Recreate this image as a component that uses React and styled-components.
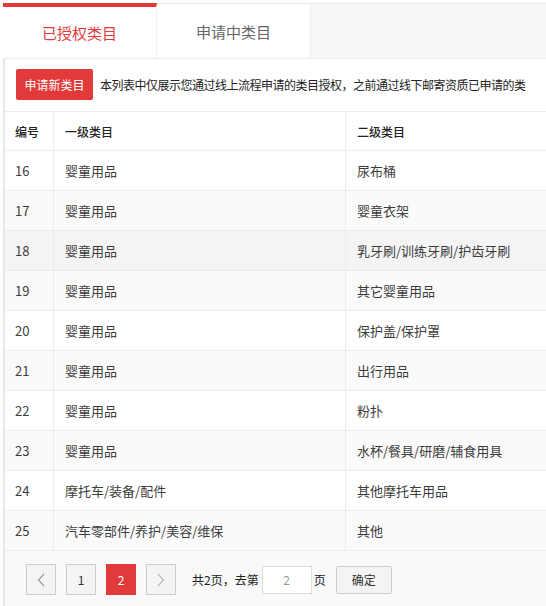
import styled, { createGlobalStyle } from 'styled-components';

const GlobalStyle = createGlobalStyle`
  body {
    margin: 0;
    background: #fff;
    font-family: "Noto Sans CJK SC", "Noto Sans", "Liberation Sans", sans-serif;
    color: #333;
  }
`;

const RED = '#e23a3a';

const rows = [
  { id: 16, first: '婴童用品', second: '尿布桶' },
  { id: 17, first: '婴童用品', second: '婴童衣架' },
  { id: 18, first: '婴童用品', second: '乳牙刷/训练牙刷/护齿牙刷', hover: true },
  { id: 19, first: '婴童用品', second: '其它婴童用品' },
  { id: 20, first: '婴童用品', second: '保护盖/保护罩' },
  { id: 21, first: '婴童用品', second: '出行用品' },
  { id: 22, first: '婴童用品', second: '粉扑' },
  { id: 23, first: '婴童用品', second: '水杯/餐具/研磨/辅食用具' },
  { id: 24, first: '摩托车/装备/配件', second: '其他摩托车用品' },
  { id: 25, first: '汽车零部件/养护/美容/维保', second: '其他' },
];

const Page = styled.div`
  width: 546px;
  height: 606px;
  padding: 3px 0 0 3px;
  box-sizing: border-box;
  overflow: hidden;
`;

const TabBar = styled.div`
  display: flex;
  height: 56px;
  background: #f7f7f7;
  border-top: 1px solid #e8e8e8;
  border-bottom: 1px solid #ececec;
  box-sizing: border-box;
`;

const Tab = styled.div`
  width: 154px;
  margin-top: ${p => (p.$active ? '-1px' : '0')};
  display: flex;
  align-items: center;
  justify-content: center;
  background: #fff;
  border-top: ${p => (p.$active ? `4px solid ${RED}` : '0')};
  border-right: 1px solid #eee;
  font-size: 15px;
  color: ${p => (p.$active ? RED : '#666')};
  padding-bottom: ${p => (p.$active ? '1px' : '0')};
  box-sizing: border-box;
`;

const Panel = styled.div`
  border-left: 2px solid #e8e8e8;
  overflow: hidden;
`;

const Toolbar = styled.div`
  display: flex;
  align-items: center;
  height: 53px;
  padding: 0 0 2px 11px;
  box-sizing: border-box;
  background: #fff;
  border-bottom: 1px solid #ececec;
  white-space: nowrap;
  overflow: hidden;
`;

const ApplyButton = styled.button`
  width: 77px;
  height: 31px;
  flex: none;
  border: 0;
  border-radius: 2px;
  background: ${RED};
  color: #fff;
  font-family: inherit;
  font-size: 12px;
  padding: 0;
`;

const Notice = styled.span`
  margin-left: 7px;
  font-size: 12px;
  letter-spacing: -0.5px;
  color: #222;
`;

const Table = styled.div`
  width: 700px;
`;

const Row = styled.div`
  display: grid;
  grid-template-columns: 49px 292px 1fr;
  height: ${p => (p.$head ? '39px' : '40px')};
  background: ${p => (p.$hover ? '#f4f4f4' : p.$striped ? '#fafafa' : '#fff')};
  border-bottom: 1px solid #ececec;
  box-sizing: border-box;
  font-size: ${p => (p.$head ? '12px' : '13px')};
  font-weight: ${p => (p.$head ? 500 : 400)};
  color: ${p => (p.$head ? '#222' : '#3c3c3c')};
`;

const Cell = styled.div`
  display: flex;
  align-items: center;
  padding-left: ${p => (p.$first ? '10px' : '11px')};
  border-right: 1px solid #ececec;
  white-space: nowrap;
`;

const Pager = styled.div`
  display: flex;
  align-items: center;
  height: 55px;
  padding: 2px 0 0 21px;
  box-sizing: border-box;
  background: #f9f9f9;
  font-size: 12px;
  color: #222;
`;

const PageBtn = styled.div`
  width: 30px;
  height: 31px;
  margin-right: 10px;
  display: flex;
  align-items: center;
  justify-content: center;
  box-sizing: border-box;
  border: 1px solid ${p => (p.$current ? RED : '#ccc')};
  background: ${p => (p.$current ? RED : '#f4f4f4')};
  color: ${p => (p.$current ? '#fff' : '#333')};
  font-size: 12px;
`;

const Arrow = styled.svg`
  width: 8px;
  height: 14px;
`;

const GoText = styled.span`
  margin-left: 6px;
`;

const PageInput = styled.div`
  width: 50px;
  height: 28px;
  margin: 0 2px 0 3px;
  display: flex;
  align-items: center;
  justify-content: center;
  box-sizing: border-box;
  border: 1px solid #ddd;
  background: #fff;
  color: #999;
`;

const ConfirmBtn = styled.div`
  width: 56px;
  height: 28px;
  margin-left: 10px;
  display: flex;
  align-items: center;
  justify-content: center;
  box-sizing: border-box;
  border: 1px solid #ccc;
  border-radius: 2px;
  background: #f4f4f4;
  color: #333;
`;

const ChevronLeft = () => (
  <Arrow viewBox="0 0 8 14">
    <path d="M7 1 L1.5 7 L7 13" fill="none" stroke="#999" strokeWidth="1.2" />
  </Arrow>
);

const ChevronRight = () => (
  <Arrow viewBox="0 0 8 14">
    <path d="M1 1 L6.5 7 L1 13" fill="none" stroke="#bbb" strokeWidth="1.2" />
  </Arrow>
);

export default function App() {
  return (
    <Page>
      <GlobalStyle />
      <TabBar>
        <Tab $active>已授权类目</Tab>
        <Tab>申请中类目</Tab>
      </TabBar>
      <Panel>
        <Toolbar>
          <ApplyButton>申请新类目</ApplyButton>
          <Notice>本列表中仅展示您通过线上流程申请的类目授权，之前通过线下邮寄资质已申请的类</Notice>
        </Toolbar>
        <Table>
          <Row $head>
            <Cell $first>编号</Cell>
            <Cell>一级类目</Cell>
            <Cell>二级类目</Cell>
          </Row>
          {rows.map((r, i) => (
            <Row key={r.id} $striped={i % 2 === 1} $hover={r.hover}>
              <Cell $first>{r.id}</Cell>
              <Cell>{r.first}</Cell>
              <Cell>{r.second}</Cell>
            </Row>
          ))}
        </Table>
        <Pager>
          <PageBtn><ChevronLeft /></PageBtn>
          <PageBtn>1</PageBtn>
          <PageBtn $current>2</PageBtn>
          <PageBtn><ChevronRight /></PageBtn>
          <GoText>共2页，去第</GoText>
          <PageInput>2</PageInput>
          <span>页</span>
          <ConfirmBtn>确定</ConfirmBtn>
        </Pager>
      </Panel>
    </Page>
  );
}
